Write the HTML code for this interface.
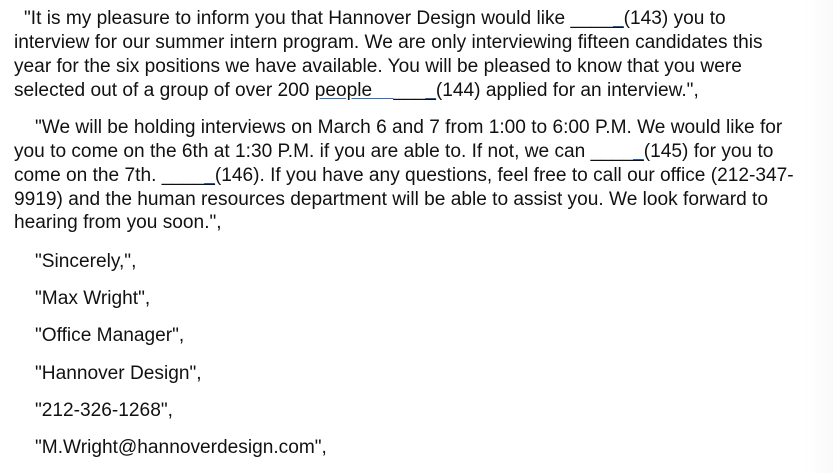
<!DOCTYPE html>
<html><head><meta charset="utf-8"><style>
html,body{margin:0;padding:0;}
body{width:833px;height:473px;overflow:hidden;background:linear-gradient(to right,#fff 0,#fff 805px,#f9f9f9 833px);font-family:"Liberation Sans",Arial,sans-serif;font-size:19px;color:#111;position:relative;}
.l{position:absolute;white-space:nowrap;transform-origin:0 0;transform:scaleX(1.006);line-height:20px;margin-top:1px;}
.b{text-decoration:underline;text-decoration-color:#2a6fd6;text-underline-offset:2px;}
</style></head><body>
<div class="l" style="left:24px;top:8px">"It is my pleasure to inform you that Hannover Design would like ____<span class="b">_</span>(143) you to</div>
<div class="l" style="left:14px;top:32px">interview for our summer intern program. We are only interviewing fifteen candidates this</div>
<div class="l" style="left:14px;top:56px">year for the six positions we have available. You will be pleased to know that you were</div>
<div class="l" style="left:14px;top:80px">selected out of a group of over 200 <span class="b">people</span><span class="b">&nbsp;&nbsp;&nbsp;&nbsp;</span>___<span class="b">_</span>(144) applied for an interview.",</div>
<div class="l" style="left:35px;top:117px">"We will be holding interviews on March 6 and 7 from 1:00 to 6:00 P.M. We would like for</div>
<div class="l" style="left:14px;top:141px">you to come on the 6th at 1:30 P.M. if you are able to. If not, we can ____<span class="b">_</span>(145) for you to</div>
<div class="l" style="left:14px;top:165px">come on the 7th. ____<span class="b">_</span>(146). If you have any questions, feel free to call our office (212-347-</div>
<div class="l" style="left:14px;top:189px">9919) and the human resources department will be able to assist you. We look forward to</div>
<div class="l" style="left:14px;top:212px">hearing from you soon.",</div>
<div class="l" style="left:35px;top:251px">"Sincerely,",</div>
<div class="l" style="left:35px;top:288px">"Max Wright",</div>
<div class="l" style="left:35px;top:325px">"Office Manager",</div>
<div class="l" style="left:35px;top:363px">"Hannover Design",</div>
<div class="l" style="left:35px;top:400px">"212-326-1268",</div>
<div class="l" style="left:35px;top:437px">"M.Wright@hannoverdesign.com",</div>
</body></html>
